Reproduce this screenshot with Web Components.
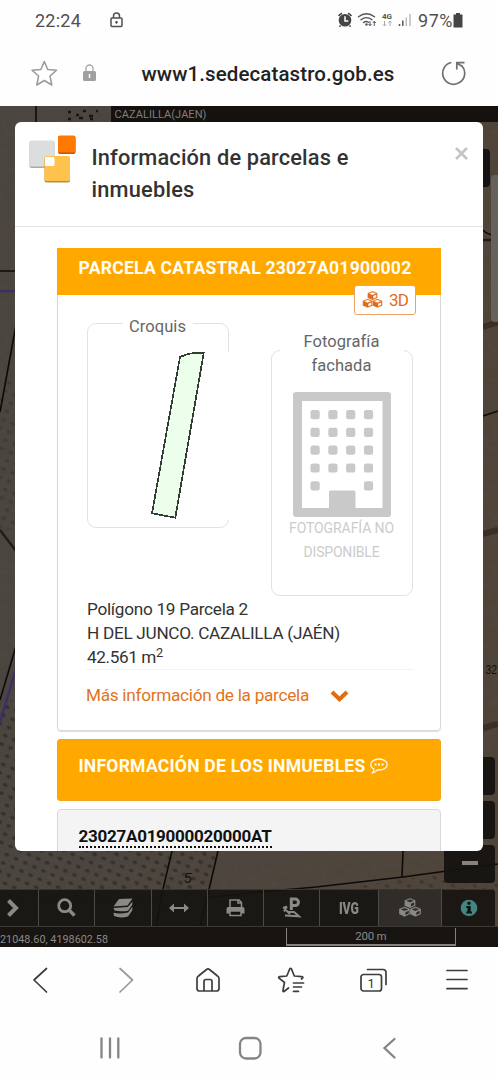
<!DOCTYPE html>
<html lang="es">
<head>
<meta charset="utf-8">
<title>Sede Catastro</title>
<style>
html,body{margin:0;height:100%;background:#fff}
body{font-family:Roboto,"Liberation Sans",sans-serif;overflow:hidden}
</style>
</head>
<body>
<phone-screen></phone-screen>
<script>
function define(name, css, html, after){
  const t=document.createElement('template');
  t.innerHTML='<style>*{box-sizing:border-box}svg{display:block;flex:none}'+css+'</style>'+html;
  customElements.define(name,class extends HTMLElement{
    constructor(){super();this.attachShadow({mode:'open'}).append(t.content.cloneNode(true));}
    connectedCallback(){if(after)after(this);}
  });
}

/* One line of text, tracked so that it spans the given width */
define('fit-text',':host{display:inline-block;white-space:nowrap}span{display:inline-block}','<span><slot></slot></span>',el=>{
  const s=el.shadowRoot.querySelector('span'),w=+el.getAttribute('w'),n=el.textContent.length;
  const have=s.getBoundingClientRect().width;
  if(have)s.style.letterSpacing=((w-have)/n).toFixed(3)+'px';
});

define('cubes-icon',':host{display:block}svg{width:100%;height:100%}',`
<svg viewBox="0.500 0 23 19.500" fill="currentColor" stroke="var(--face,#fff)" stroke-width=".35" stroke-linejoin="round">
<g><path d="M12 0 17.700 2.300V8L12 10.500 6.300 8V2.300Z"/><path d="M8.600 2.900 12 1.600 15.400 2.900 12 4.300Z" fill="var(--face,#fff)"/><path d="M12.900 5.800 16.300 4.400V7.100L12.900 8.700Z" fill="var(--face,#fff)" stroke="none"/></g>
<g transform="translate(-5.600 8.800)"><path d="M12 0 17.700 2.300V8L12 10.500 6.300 8V2.300Z"/><path d="M8.600 2.900 12 1.600 15.400 2.900 12 4.300Z" fill="var(--face,#fff)"/><path d="M12.900 5.800 16.300 4.400V7.100L12.900 8.700Z" fill="var(--face,#fff)" stroke="none"/></g>
<g transform="translate(5.600 8.800)"><path d="M12 0 17.700 2.300V8L12 10.500 6.300 8V2.300Z"/><path d="M8.600 2.900 12 1.600 15.400 2.900 12 4.300Z" fill="var(--face,#fff)"/><path d="M12.900 5.800 16.300 4.400V7.100L12.900 8.700Z" fill="var(--face,#fff)" stroke="none"/></g>
</svg>`);

define('status-bar',`:host{display:flex;align-items:center;height:40px;padding:0 35px 0 35px;color:#505050;font-size:18px}
.sp{flex:1}.lock{margin-left:28.500px}.pct{margin-left:6.500px}`,`
<fit-text w="46">22:24</fit-text>
<svg class="lock" width="13" height="16" viewBox="0 0 13 16" fill="none" stroke="#505050" stroke-width="1.500"><rect x="1" y="6" width="11" height="8.500" rx="1"/><path d="M3.500 6V4a3 3 0 0 1 6 0V6"/><circle cx="6.500" cy="10.300" r=".6" fill="#505050"/></svg>
<span class="sp"></span>
<svg width="75" height="20" viewBox="0 0 75 20">
<g fill="#454545"><circle cx="8" cy="10.300" r="6.300"/><path d="M1.600 6A8 8 0 0 1 5 3.300M11 3.300A8 8 0 0 1 14.400 6M3.500 15.500l-1 1.300M12.500 15.500l1 1.300" stroke="#454545" stroke-width="1.600" fill="none"/><path d="M8 6.300V11H11.300" stroke="#fff" stroke-width="1.500" fill="none"/></g>
<g fill="none" stroke="#555" stroke-width="1.400" stroke-linecap="round"><path d="M21.500 6.800Q29.500 .800 37.500 6.800M24 9.800Q29.500 5.500 35 9.800M26.500 12.500Q29 10.500 31.500 12.300"/><path d="M33 11.500v4m-1.300-1.200 1.300 1.400 1.300-1.400M37.300 15.500v-4m-1.300 1.200 1.300-1.300 1.300 1.300" stroke-width="1"/></g><circle cx="29.500" cy="14.500" r="1.200" fill="#555"/>
<text x="45" y="9" font-family="Roboto" font-weight="700" font-size="8" fill="#555">4G</text>
<path d="M47.500 11v5m-1.600-1.600 1.600 1.600 1.600-1.600M53 16v-5m-1.600 1.600L53 11l1.600 1.600" fill="none" stroke="#aaa"/>
<path d="M62.500 14v2" stroke="#555" stroke-width="1.500"/><path d="M65.800 10.500V16" stroke="#555" stroke-width="1.500"/><path d="M69.300 7.500V16M73 4V16" stroke="#bbb" stroke-width="1.500"/></svg>
<fit-text class="pct" w="35">97%</fit-text>
<svg width="10" height="15" viewBox="0 0 10 15" fill="#454545"><path d="M3 0H7V1.500H9.500V14.500H.5V1.500H3Z"/></svg>`);

define('url-bar',`:host{display:flex;align-items:center;height:66px;padding:0 31px 0 31px;color:#222}
.lk{margin-left:24.500px}.u{font-size:20.500px;font-weight:500;margin-left:46px;flex:1;padding-top:1px}`,`
<svg width="27" height="27" viewBox="0 0 27 27" fill="none" stroke="#999" stroke-width="1.500" stroke-linejoin="round"><path d="M13.300 1.500 16.700 9.500 25.500 10.300 19 16 20.800 25 13.300 20.500 5.800 25 7.600 16 1 10.300 9.900 9.500Z"/></svg>
<svg class="lk" width="13" height="18" viewBox="0 0 13 18"><rect y="7" width="13" height="10" rx="1.500" fill="#a0a0a0"/><path d="M3 7.500V4.500a3.500 3.500 0 0 1 7 0V7.500" fill="none" stroke="#aaa" stroke-width="1.400"/><path d="M6.500 10v4" stroke="#fff" stroke-width="1.500"/></svg>
<div class="u"><fit-text w="253">www1.sedecatastro.gob.es</fit-text></div>
<svg width="26" height="26" viewBox="0 0 26 26" fill="none" stroke="#707070" stroke-width="1.700"><path d="M10.300 2.500A11 11 0 1 0 21 6"/><path d="M15.800 9.500V2.600H23.500M16 3.200 21.500 6.500"/></svg>`);

define('map-canvas',':host{display:block}svg{width:100%;height:100%}',`
<svg viewBox="0 106 498 841" preserveAspectRatio="none">
<defs>
<filter id="grain" x="0" y="0" width="100%" height="100%"><feTurbulence type="fractalNoise" baseFrequency=".1 .16" numOctaves="3" seed="7"/><feColorMatrix values="0 0 0 0 .08 0 0 0 0 .07 0 0 0 0 .06 2.500 0 0 0 -1.050"/></filter>
<pattern id="trees" width="10" height="9" patternUnits="userSpaceOnUse" patternTransform="rotate(24)"><ellipse cx="4" cy="4" rx="2.600" ry="1.800" fill="#25211e" opacity=".6"/></pattern>
<linearGradient id="soil" x1="0" x2="1"><stop stop-color="#4b4540"/><stop offset="1" stop-color="#504438"/></linearGradient>
</defs>
<rect y="106" width="498" height="841" fill="url(#soil)"/>
<rect y="106" width="498" height="841" filter="url(#grain)" opacity=".55"/>
<path d="M0 700H15V851H172L160 900H0Z M172 851H218L207 898H160Z" fill="url(#trees)"/>
<path d="M0 380H16V530H0Z" fill="url(#trees)" opacity=".5"/>
<path d="M330 890 440 874 498 868V889H330Z" fill="url(#trees)" opacity=".6"/>
<path d="M68 112h3m5 3h3m4-4h3m3 5h4m3-5h2m-30 8h3m8-1h4m7 1h3" stroke="#171513" stroke-width="2.500"/>
<path d="M36 106V122M0 271H16M16 325 0 412M16 646 0 700M172 851 163 889 152 947M218 851 207 898 195 947M403 851 402 877M207 898 248 893 316 887 403 877 498 864M483 230Q490 237 498 234M483 416 498 411" fill="none" stroke="#0d0b0a" stroke-width="1.600"/>
<path d="M0 530 16 551M483 240H498" stroke="#211d17" stroke-width="2.500"/>
<path d="M0 291H16M16 669 0 722" stroke="#393064" stroke-width="2.500"/>
<path d="M483 327 498 322M483 534 498 530M483 728 498 724" stroke="#3b3027" stroke-width="6"/>
<text x="485.500" y="674" font-family="Liberation Sans" font-size="13" textLength="11.500" lengthAdjust="spacingAndGlyphs" fill="#12100e">32</text>
<text x="184" y="883" font-family="Liberation Sans" font-size="14" font-style="italic" fill="#12100e">5</text>
</svg>`);

define('map-toolbar',`:host{display:block;color:#8b8986}
.row{display:grid;grid-template-columns:39px 56px 56.500px 56.500px 56px 56px 59px 63px 1fr;height:37.500px;width:495px;border-radius:0 4px 0 0;overflow:hidden}
.row>div{background:#151311e6;border-right:1px solid #4c4a45;border-top:1px solid #383530;display:flex;align-items:center;justify-content:center}
.row>div:last-child{border-right:0}.row>div.on{background:#302c28}
.row>div:first-child{padding-right:12px}
.ft{display:flex;height:21px;border-top:1px solid #3c3935;background:#171412;font-size:10.800px}
.co{width:285.500px;padding-top:6px;line-height:13px;white-space:nowrap}
.sc{width:170.500px;height:18px;margin-top:1px;border:solid #85827f;border-width:0 1.500px 2px;text-align:center;line-height:16px;font-size:11.500px}
cubes-icon{width:24px;height:19px;--face:#302c28}.ivg{font-size:17px;font-weight:900}.ivg b{font-weight:900;transform:scaleX(.72)}`,`
<div class="row">
<div><svg width="12" height="18" viewBox="0 0 12 18" fill="none" stroke="currentColor" stroke-width="4"><path d="M1.500 1.500 9 9 1.500 16.500"/></svg></div>
<div><svg width="19" height="19" viewBox="0 0 19 19" fill="none" stroke="currentColor" stroke-width="2.800"><circle cx="7.700" cy="7.700" r="6"/><path d="M12 12 17.500 17.500" stroke-width="3.300"/></svg></div>
<div><svg width="22" height="20" viewBox="0 0 22 20" fill="currentColor"><path d="M7 1 20.500 .5 15.500 7.500 1.500 8.500Z"/><path d="M1.500 10 15.800 9 20.500 3.500 20.200 7 16 12.800Q8 14 2.500 12.500Z"/><path d="M1.500 14.800Q8 16.500 16 14.500L20.500 8.700 20.200 12.500 16 18.500Q8 20.500 2 18Z"/></svg></div>
<div><svg width="20" height="10" viewBox="0 0 20 10"><path d="M3 5H17" stroke="currentColor" stroke-width="2.200"/><path d="M0 5 5 .5V9.500ZM20 5 15 .5V9.500Z" fill="currentColor"/></svg></div>
<div><svg width="19" height="18" viewBox="0 0 19 18"><path d="M4 9V1H13L15.500 3.500V9M12 1V4H15" fill="none" stroke="currentColor" stroke-width="1.600"/><path d="M.5 10Q.5 8 2.500 8H16.500Q18.500 8 18.500 10V14.500H.5Z" fill="currentColor"/><rect x="4" y="12" width="11" height="4.500" fill="#151311" stroke="currentColor" stroke-width="1.500"/></svg></div>
<div><svg width="20" height="21" viewBox="0 0 20 21" fill="none" stroke="currentColor"><path d="M9.300 13V2H13.200A3.300 3.300 0 0 1 13.200 8.600H10" stroke-width="3"/><path d="M1 11 5 9.500M5 9.500 2 14.500M2 11 8 17M3 18.500 17 19.300 12 15H6" stroke-width="2"/></svg></div>
<div class="ivg"><b>IVG</b></div>
<div class="on"><cubes-icon></cubes-icon></div>
<div><svg width="18" height="18" viewBox="0 0 18 18"><circle cx="9" cy="9" r="8.300" fill="#438681"/><g fill="#111"><circle cx="9" cy="4.300" r="1.700"/><path d="M6.300 7H10.700V12.500H12V14.500H6.300V12.500H7.500V9H6.300Z"/></g></svg></div>
</div>
<div class="ft"><div class="co"><fit-text w="108">21048.60, 4198602.58</fit-text></div><div class="sc"><fit-text w="31">200 m</fit-text></div></div>`);

define('map-view',`:host{display:block;position:relative;height:841px;overflow:hidden;background:#4a433b}
map-canvas{position:absolute;inset:0}
.place{position:absolute;left:110.500px;right:0;top:0;height:16px;background:#14110f;color:#817e7b;font-size:11px;line-height:17px;padding-left:4px}
.side{position:absolute;right:3px;top:651px;width:51px;display:flex;flex-direction:column;gap:6px}
.side div{height:38px;background:#151311f2;border-radius:4px;display:flex;align-items:center;justify-content:center}
.side i{width:16px;height:4px;background:#858280;margin-top:-3px}
.menu{position:absolute;right:8px;top:43px;width:30px;height:38px;background:#151311;border-radius:4px}
.mini{position:absolute;right:0;top:69px;width:7px;height:147px;background:#67615b;border-radius:4px 0 0 4px}
map-toolbar{position:absolute;left:0;right:0;bottom:0}`,`
<map-canvas></map-canvas><div class="place"><fit-text w="92">CAZALILLA(JAEN)</fit-text></div><div class="menu"></div><div class="mini"></div>
<div class="side"><div></div><div></div><div><i></i></div></div><map-toolbar></map-toolbar><slot></slot>`);

define('frame-box',`:host{display:block;width:142px;border:1px solid #e2e2e2;border-radius:9px}
.l{display:block;width:var(--lw);margin:var(--lt) auto 0;background:#fff;text-align:center;color:#666;font-size:16.500px;line-height:24px}`,`
<div class="l"><slot name="legend"></slot></div><slot></slot>`);

define('parcel-card',`:host{display:block;width:383.500px;height:483px;border:1px solid #d9d9d9;border-radius:0 0 4px 4px;color:#333;font-size:17.200px;box-shadow:0 1px 1px #ddd}
.h{background:#ffa800;height:47px;margin:-1px -1px 0;color:#fffdf5;font-weight:700;font-size:17.600px;line-height:40px;padding-left:21.500px}
.b{width:62px;height:30px;margin:-10px 23.500px 0 auto;border:1px solid #efa168;border-radius:3px;background:#fff;color:#df6c1c;display:flex;align-items:center;gap:6px;padding-left:7px;font-size:17px}
cubes-icon{width:21px;height:17px}
.g{display:flex;gap:42px;padding:8.500px 0 0 28.500px;align-items:flex-start}
.a{height:205px;--lw:70px;--lt:-9px}.p{margin-top:27px;height:246px;--lw:124px;--lt:-21px}
.pic{width:108px;height:168px;margin:13px -2px 0 auto;background:#fff}
.pic svg{margin-left:-2px}
.no{display:flex;flex-direction:column;align-items:center;color:#ccc;font-size:14px;line-height:24px}
.no svg{margin:14px 0 0}.no fit-text{position:relative;top:-1px}
.t{padding:1px 0 0 29px;line-height:24px}.t div{height:24px}
sup{font-size:12.800px;line-height:0;vertical-align:6px}
.m{margin:0 26px 0 28px;height:50px;border-top:1px solid #f3f3f3;color:#df7422;display:flex;align-items:center}
.m svg{margin:3px 0 0 21px}`,`
<div class="h"><fit-text w="333">PARCELA CATASTRAL 23027A01900002</fit-text></div>
<div class="b"><cubes-icon></cubes-icon><fit-text w="19">3D</fit-text></div>
<div class="g">
<frame-box class="a"><fit-text slot="legend" w="57">Croquis</fit-text><div class="pic"><svg width="108" height="168" viewBox="119 353 108 168"><path d="M179 358Q186 354.500 193 354H202.700L174.300 518.700 151 514.300Z" fill="#ebffeb" stroke="#343c38" stroke-width="1.700" shape-rendering="crispEdges"/></svg></div></frame-box>
<frame-box class="p"><span slot="legend"><fit-text w="76">Fotografía</fit-text><br><fit-text w="60">fachada</fit-text></span>
<div class="no"><svg width="98" height="125" viewBox="0 0 98 125" fill="#c9c9c9"><path fill-rule="evenodd" d="M3 0H95Q98 0 98 3V122Q98 125 95 125H3Q0 125 0 122V3Q0 0 3 0ZM9 9V116H36V100Q36 98.500 37.500 98.500H61Q62.500 98.500 62.500 100V116H89.500V9Z"/><g id="w"></g></svg><fit-text w="105">FOTOGRAFÍA NO</fit-text><fit-text w="76">DISPONIBLE</fit-text></div></frame-box>
</div>
<div class="t"><div><fit-text w="161">Polígono 19 Parcela 2</fit-text></div><div><fit-text w="253">H DEL JUNCO. CAZALILLA (JAÉN)</fit-text></div><div><fit-text w="69">42.561 m</fit-text><sup>2</sup></div></div>
<div class="m"><fit-text w="223">Más información de la parcela</fit-text><svg width="19" height="13" viewBox="0 0 19 13" fill="none" stroke="#e56a0b" stroke-width="4"><path d="M2 2 9.500 9.300 17 2"/></svg></div>`,el=>{
  let s='';for(let r=0;r<5;r++)for(let c=0;c<4;c++)if(r<4||c%3==0)s+=`<rect x="${17.5+c*17.8}" y="${18+r*17.8}" width="9.200" height="9.200" rx="2.200"/>`;
  el.shadowRoot.querySelector('#w').innerHTML=s;
});

define('info-modal',`:host{display:block;position:absolute;left:15px;top:15.500px;width:467.500px;height:729.500px;background:#fff;border-radius:6px;overflow:hidden}
header{display:flex;height:105.500px;border-bottom:1px solid #e2e2e2;padding:13px 15px 0 13.500px;align-items:flex-start}
h4{margin:7px 0 0 16px;flex:1;font-size:21.800px;line-height:32px;font-weight:500;color:#333}
.x{margin-top:12px}
main{padding:20.500px 42px 0}
.o{margin-top:8px;height:62px;width:383.500px;border-radius:3px;background:#ffa800;border:1px solid #f2a51b;color:#fffdf2;font-weight:700;font-size:17.600px;padding-left:20.500px;display:flex;align-items:center;gap:5px;padding-bottom:8px}
.r{margin-top:8px;height:60px;width:383.500px;border:1px solid #d7dada;border-radius:4px;background:#f4f4f4;padding:16px 20.500px;font-size:17px;font-weight:700;color:#111}
.r fit-text{border-bottom:2px dotted #111;line-height:20px}`,`
<header><svg width="47" height="48" viewBox="0 0 47 48"><rect x=".5" y="6" width="25" height="27" rx="2" fill="#aaa"/><rect x=".5" y="5.500" width="25" height="26" rx="2" fill="#dcdddd"/><rect x="29" y="1" width="17.500" height="18" rx="2" fill="#bd5614"/><rect x="29" y=".5" width="17.500" height="17" rx="2" fill="#ff7800"/><rect x="15.500" y="22" width="25.500" height="25.500" rx="2" fill="#b18e50"/><rect x="15.500" y="21" width="25.500" height="25" rx="2" fill="#ffc34d"/><rect x="16" y="22" width="9.500" height="9" rx="1" fill="#fff"/></svg>
<h4><fit-text w="257">Información de parcelas e</fit-text><br><fit-text w="103">inmuebles</fit-text></h4>
<svg class="x" width="13" height="13" viewBox="0 0 13 13" stroke="#c4c4c4" stroke-width="2.600"><path d="M1 1 12 12M12 1 1 12"/></svg></header>
<main><parcel-card></parcel-card>
<div class="o"><fit-text w="287">INFORMACIÓN DE LOS INMUEBLES</fit-text><svg width="18" height="16" viewBox="0 0 18 16" fill="none" stroke="#fffdf2" stroke-width="1.300"><path d="M9 1C13.500 1 17.200 3.500 17.200 6.700S13.500 12 9 12L7.500 11.900Q5.500 14.500 2.500 14.800Q4 13 4 11Q.8 9.500 .8 6.700C.8 3.500 4.500 1 9 1Z"/><path d="M4.500 6.600h2m1.500 0h2m1.500 0h2" stroke-width="2"/></svg></div>
<div class="r"><fit-text w="193">23027A019000020000AT</fit-text></div></main>`);

define('browser-nav',`:host{display:grid;grid-template-columns:repeat(6,83px);height:66px;align-items:center;justify-items:center}svg{fill:none;stroke:#3d3d3d;stroke-width:1.700;stroke-linejoin:round;stroke-linecap:round}text{stroke:none;fill:#333;font:13px Roboto}`,`
<svg width="28" height="28" viewBox="0 0 28 28"><path d="M18.500 2.500 6 14 18.500 26"/></svg>
<svg width="28" height="28" viewBox="0 0 28 28" style="stroke:#999"><path d="M9 2.500 21.500 14 9 26"/></svg>
<svg width="28" height="28" viewBox="0 0 28 28"><path d="M3 12.500Q3 11 4.500 10L12.500 3.500Q14 2.300 15.500 3.500L23.500 10Q25 11 25 12.500V22.500Q25 25 22.500 25H5.500Q3 25 3 22.500ZM10 25V15.500Q10 13.500 12 13.500H16Q18 13.500 18 15.500V25"/></svg>
<svg width="28" height="28" viewBox="0 0 28 28"><path d="M11.500 22 7 25.500Q5.500 26 6 24L7.500 16.500 2 12.200Q1 11 3 10.700L9.800 10 12.700 3Q13.600 1.500 14.500 3L17.300 10 24.700 10.700Q26.500 11 25.500 12.200L24.500 13M16.500 17H26.500M16.500 21H24.500M16.500 25.300H21.500"/></svg>
<svg width="28" height="28" viewBox="0 0 28 28"><rect x="1" y="8.500" width="20.500" height="16.500" rx="2.500"/><path d="M7.500 3.500H23Q26 3.500 26 6.500V18.500"/><text x="7.500" y="21.500">1</text></svg>
<svg width="28" height="28" viewBox="0 0 28 28"><path d="M4 4.500H24M4 13.500H24M4 22.700H24"/></svg>`);

define('system-nav',`:host{display:grid;grid-template-columns:repeat(3,139.500px);justify-content:center;height:67px;align-items:center;justify-items:center;padding:2px 0 0 1px}svg{fill:none;stroke:#858585;stroke-width:2.300;stroke-linecap:round}`,`
<svg width="24" height="24" viewBox="0 0 24 24"><path d="M3.500 2.500V21.500M12 2.500V21.500M20.300 2.500V21.500"/></svg>
<svg width="24" height="24" viewBox="0 0 24 24"><rect x="2" y="2" width="20.500" height="20.500" rx="6"/></svg>
<svg width="24" height="24" viewBox="0 0 24 24"><path d="M17.500 3 7.500 12 17.500 21.500"/></svg>`);

define('phone-screen',':host{display:flex;flex-direction:column;width:498px;height:1080px;background:#fefefe}',`
<status-bar></status-bar><url-bar></url-bar><map-view><info-modal></info-modal></map-view><browser-nav></browser-nav><system-nav></system-nav>`);
</script>
</body>
</html>
